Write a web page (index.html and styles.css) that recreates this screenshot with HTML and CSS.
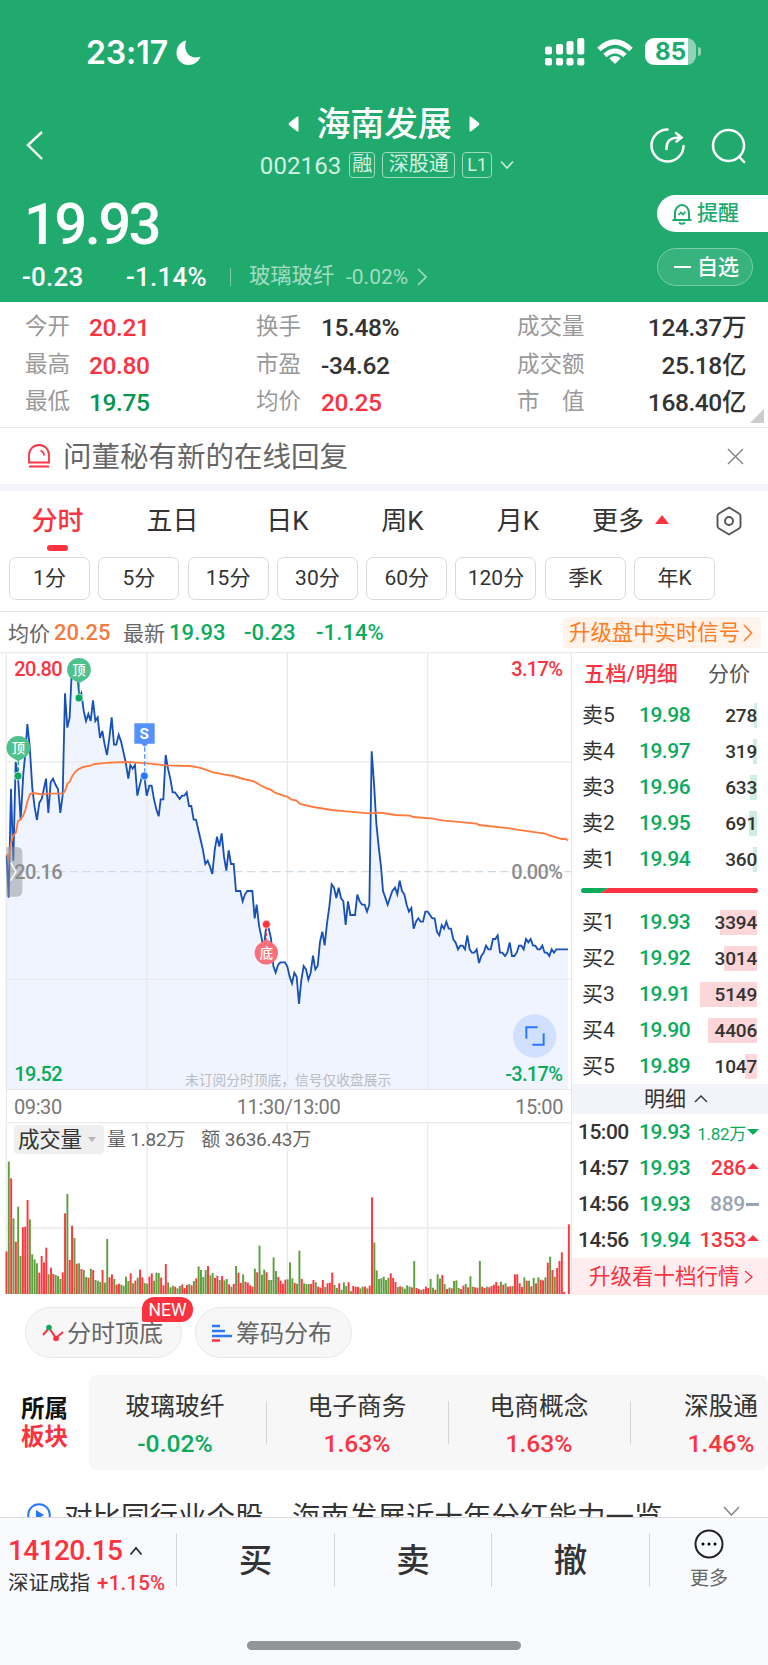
FILE: index.html
```html
<!DOCTYPE html>
<html lang="zh-CN">
<head>
    <meta charset="UTF-8">
    <meta name="viewport" content="width=device-width, initial-scale=1.0">
    <title>海南发展 002163</title>
    <link rel="stylesheet" href="styles.css">
</head>
<body>

<header class="header">
    <div class="status-bar">
        <div class="clock">23:17</div>
        <svg class="moon" width="26" height="26" viewBox="0 0 26 26"><path d="M9 1C5 3 1.500 7 1.500 13A12 12 0 0 0 13.500 25C19 25 23.500 22 25.500 16.500C17 20 7.500 14 11 .5Q10 .5 9 1Z" fill="#fff"/></svg>
        <div class="status-icons">
            <svg width="40" height="28" viewBox="0 0 40 28" fill="#fff">
                <rect x="0" y="8.500" width="7" height="8" rx="2"/><rect x="11" y="6" width="7" height="10.500" rx="2"/><rect x="21.500" y="3" width="7" height="13.500" rx="2"/><rect x="32.300" y="0" width="7" height="16.500" rx="2"/>
                <rect x="0" y="20" width="7" height="7.500" rx="2"/><rect x="11" y="20" width="7" height="7.500" rx="2"/><rect x="21.500" y="20" width="7" height="7.500" rx="2"/><rect x="32.300" y="20" width="7" height="7.500" rx="2"/>
            </svg>
            <svg class="wifi" width="36" height="26" viewBox="0 0 36 26" fill="none" stroke="#fff" stroke-width="5">
                <path d="M2 10.500Q18-4.500 34 10.500"/><path d="M8 16.500Q18 7.500 28 16.500"/><path d="M18 25L12.300 19.300Q18 14.700 23.700 19.300Z" fill="#fff" stroke="none"/>
            </svg>
            <div class="battery"><span>85</span></div>
            <div class="battery-tip"></div>
        </div>
    </div>

    <nav class="nav">
        <svg class="back" width="20" height="32" viewBox="0 0 20 32"><path d="M17 3L3 16L17 30" fill="none" stroke="#fff" stroke-width="2.400"/></svg>
        <div class="nav-center">
            <div class="title-row">
                <svg width="11" height="16" viewBox="0 0 11 16"><path d="M10.500 1V15Q10 16 8.500 15L1 9Q0 8 1 7L8.500 1Q10 0 10.500 1Z" fill="#fff"/></svg>
                <h1>海南发展</h1>
                <svg width="11" height="16" viewBox="0 0 11 16"><path d="M.5 1V15Q1 16 2.500 15L10 9Q11 8 10 7L2.500 1Q1 0 .5 1Z" fill="#fff"/></svg>
            </div>
            <div class="code-row">
                <span class="code">002163</span>
                <span class="tag">融</span>
                <span class="tag">深股通</span>
                <span class="tag tag-l1">L1</span>
                <svg width="14" height="10" viewBox="0 0 14 10"><path d="M1 1.500L7 8L13 1.500" fill="none" stroke="#c9ecdb" stroke-width="1.700"/></svg>
            </div>
        </div>
        <div class="nav-actions">
            <svg width="36" height="36" viewBox="0 0 36 36" fill="none" stroke="#fff" stroke-width="2.500" stroke-linecap="round">
                <path d="M17.500 1.500A16 16 0 1 0 33.500 18"/><path d="M16.500 21C16.500 13 20 9.500 30 9.500"/><path d="M26 5L31.500 9.500L26.500 13.500"/>
            </svg>
            <svg width="36" height="36" viewBox="0 0 36 36" fill="none" stroke="#fff" stroke-width="2.500" stroke-linecap="round">
                <circle cx="17.500" cy="17.500" r="15.500"/><path d="M28.500 29L33 34"/>
            </svg>
        </div>
    </nav>

    <div class="quote">
        <div class="quote-main">
            <div class="price">19.93</div>
            <div class="change-row">
                <span class="chg">-0.23</span>
                <span class="pct">-1.14%</span>
                <i class="sep"></i>
                <span class="industry">玻璃玻纤</span>
                <span class="industry-pct">-0.02%</span>
                <svg width="10" height="18" viewBox="0 0 10 18"><path d="M1 1L9 9L1 17" fill="none" stroke="#a3dcc3" stroke-width="1.600"/></svg>
            </div>
        </div>
        <div class="quote-actions">
            <button class="remind">
                <svg width="22" height="22" viewBox="0 0 22 22" fill="none" stroke="#20aa6d" stroke-width="2"><path d="M1.500 17H20.500M4 16.500V10A7 8 0 0 1 18 10V16.500M8 19.500Q11 22 14 19.500"/><path d="M7.500 12L10 9.500L12 11.500L14.500 8.500" stroke-width="1.700"/></svg>
                <span>提醒</span>
            </button>
            <button class="watch"><i></i><span>自选</span></button>
        </div>
    </div>
</header>

<section class="stats">
    <div class="stat-col col-1">
        <span>今开</span><b class="red">20.21</b>
        <span>最高</span><b class="red">20.80</b>
        <span>最低</span><b class="green-dark">19.75</b>
    </div>
    <div class="stat-col col-2">
        <span>换手</span><b>15.48%</b>
        <span>市盈</span><b>-34.62</b>
        <span>均价</span><b class="red">20.25</b>
    </div>
    <div class="stat-col col-3">
        <span>成交量</span><b>124.37万</b>
        <span>成交额</span><b>25.18亿</b>
        <span>市　值</span><b>168.40亿</b>
    </div>
    <i class="corner"></i>
</section>

<section class="notice">
    <svg width="22" height="24" viewBox="0 0 22 24" fill="none" stroke="#fb3340" stroke-width="1.800"><path d="M1 18.500V11A10 10 0 0 1 21 11V18.500ZM1 22.500H21M12.500 6.500Q16 8 16 11.500"/></svg>
    <span>问董秘有新的在线回复</span>
    <svg class="close" width="17" height="17" viewBox="0 0 17 17"><path d="M1 1L16 16M16 1L1 16" stroke="#888" stroke-width="1.500"/></svg>
</section>

<nav class="tabs">
    <a class="active">分时</a>
    <a>五日</a>
    <a>日K</a>
    <a>周K</a>
    <a>月K</a>
    <a class="more">更多<i></i></a>
    <svg width="26" height="30" viewBox="0 0 26 30" fill="none" stroke="#555" stroke-width="1.900"><path d="M13 1.500L23 7.500Q24.500 8.500 24.500 10V20Q24.500 21.500 23 22.500L13 28.500L3 22.500Q1.500 21.500 1.500 20V10Q1.500 8.500 3 7.500Z"/><circle cx="13" cy="15" r="4"/></svg>
</nav>

<div class="periods">
    <button>1分</button>
    <button>5分</button>
    <button>15分</button>
    <button>30分</button>
    <button>60分</button>
    <button>120分</button>
    <button>季K</button>
    <button>年K</button>
</div>

<div class="info-row">
    <span class="label">均价</span><b class="orange">20.25</b>
    <span class="label">最新</span><b class="green">19.93</b><b class="green c1">-0.23</b><b class="green c2">-1.14%</b>
    <a class="upgrade">升级盘中实时信号<svg width="10" height="18" viewBox="0 0 10 18"><path d="M1 1L8.500 9L1 17" fill="none" stroke="#ff7c21" stroke-width="1.600"/></svg></a>
</div>

<main class="board">
    <div class="charts">
        <!-- three svg units per css pixel -->
        <svg class="price-chart" width="572" height="437" viewBox="0 36 1716 1311">
            <polygon id="area" fill="#eff4ff"/>
            <g stroke="#ebebed" stroke-width="4" fill="none">
                <path d="M19 36V1347M441 36V1347M862 36V1347M1283 36V1347M0 38H1716M19 366H1714M19 1018H1714"/>
            </g>
            <path d="M19 695H1714" stroke="#cfdce5" stroke-width="4" stroke-dasharray="25 13"/>
            <polyline id="priceLine" fill="none" stroke="#1750b6" stroke-width="5.500"/>
            <polyline id="avgLine" fill="none" stroke="#ff7a3c" stroke-width="5.500"/>
            <path d="M19 621H50Q67 621 67 638V753Q67 770 50 770H19Z" fill="#8d8f94" fill-opacity=".5"/>
            <path d="M32 668L48 695L32 722" fill="none" stroke="#fff" stroke-width="4"/>

            <g fill="#4fc18d">
                <path d="M55 288A35 35 0 0 1 72 354L55 364L38 354A35 35 0 0 1 55 288Z"/>
                <path d="M237 54A35 35 0 0 1 254 120L237 130L220 120A35 35 0 0 1 237 54Z"/>
            </g>
            <g stroke="#12ad63" stroke-width="4" stroke-dasharray="12 6"><path d="M55 364V408M237 130V173"/></g>
            <g fill="#0bab5d" stroke="#fff" stroke-width="2"><circle cx="54" cy="408" r="12"/><circle cx="237" cy="174" r="12"/></g>
            <path d="M403 250H464V311H445L434 320L423 311H403Z" fill="#5591ff"/>
            <path d="M434 322V400" stroke="#5591ff" stroke-width="4" stroke-dasharray="13 8"/>
            <circle cx="433" cy="408" r="12" fill="#2878ff" stroke="#fff" stroke-width="2"/>
            <path d="M799 864V898" stroke="#fb3340" stroke-width="4" stroke-dasharray="10 5"/>
            <path d="M799 897L816 908A35 35 0 1 1 782 908Z" fill="#f9707b"/>
            <circle cx="799" cy="853" r="12" fill="#fb3340" stroke="#fff" stroke-width="2"/>
            <g class="marker">
                <text x="55" y="338">顶</text>
                <text x="237" y="104">顶</text>
                <text x="799" y="954">底</text>
                <text x="433" y="297" class="marker-s">S</text>
            </g>

            <g class="axis">
                <text x="43" y="107" fill="#fb3340">20.80</text>
                <text x="43" y="716" fill="#8c8c8c">20.16</text>
                <text x="43" y="1323" fill="#0bab5d">19.52</text>
                <g text-anchor="end">
                    <text x="1687" y="107" fill="#fb3340">3.17%</text>
                    <text x="1687" y="716" fill="#8c8c8c">0.00%</text>
                    <text x="1687" y="1323" fill="#0bab5d">-3.17%</text>
                </g>
            </g>
            <text x="555" y="1335" class="hint">未订阅分时顶底，信号仅收盘展示</text>
            <circle cx="1604" cy="1188" r="65" fill="#d2e0ff"/>
            <path d="M1579 1196V1162H1613M1631 1180V1214H1597" fill="none" stroke="#2878ff" stroke-width="6"/>
        </svg>
        <div class="time-axis"><span>09:30</span><span>11:30/13:00</span><span>15:00</span></div>
        <div class="volume">
            <div class="volume-head"><span class="volume-tag">成交量<i></i></span><span>量 1.82万</span><span>额 3636.43万</span></div>
            <svg class="volume-chart" width="572" height="172" viewBox="0 0 1716 516">
                <path d="M19 0V516M441 0V516M862 0V516M1283 0V516M19 2H1716M19 318H1714" fill="none" stroke="#ebebed" stroke-width="4"/>
                <g id="bars"></g>
            </svg>
        </div>
    </div>

    <aside class="orders">
        <div class="order-tabs"><b>五档/明细</b><span>分价</span></div>
        <div class="order-list" id="sells"></div>
        <div class="ratio"><svg width="177" height="5" viewBox="0 0 177 5"><path d="M2.500 0H27L20 5H2.500A2.500 2.500 0 0 1 2.500 0Z" fill="#0bab5d"/><path d="M27 0H174.500A2.500 2.500 0 0 1 174.500 5H20Z" fill="#fb3340"/></svg></div>
        <div class="order-list" id="buys"></div>
        <div class="detail-head"><span>明细</span><svg width="14" height="8" viewBox="0 0 14 8"><path d="M1 7L7 1L13 7" fill="none" stroke="#333" stroke-width="1.400"/></svg></div>
        <div class="ticks">
            <div class="tick"><b>15:00</b><b class="green">19.93</b><em class="green small">1.82万<i class="down"></i></em></div>
            <div class="tick"><b>14:57</b><b class="green">19.93</b><em class="red">286<i class="up"></i></em></div>
            <div class="tick"><b>14:56</b><b class="green">19.93</b><em class="flat">889<i class="dash"></i></em></div>
            <div class="tick"><b>14:56</b><b class="green">19.94</b><em class="red">1353<i class="up"></i></em></div>
        </div>
        <a class="upgrade-ten"><span>升级看十档行情</span><svg width="9" height="14" viewBox="0 0 9 14"><path d="M1 1L8 7L1 13" fill="none" stroke="#fb3340" stroke-width="1.300"/></svg></a>
    </aside>
</main>

<div class="tools">
    <button>
        <svg width="22" height="18" viewBox="0 0 22 18"><path d="M1 11L7 4L14 14L21 8" fill="none" stroke="#fb3340" stroke-width="2"/><circle cx="7" cy="3.500" r="2.800" fill="#0bab5d"/><circle cx="14" cy="14.500" r="2.800" fill="#fb3340"/></svg>
        <span>分时顶底</span>
        <span class="new">NEW</span>
    </button>
    <button>
        <svg width="21" height="18" viewBox="0 0 21 18" stroke-width="2.500"><path d="M0 2H8M0 7H13M0 12H20" stroke="#2878ff"/><path d="M0 16.500H8" stroke="#fb3340"/></svg>
        <span>筹码分布</span>
    </button>
</div>

<section class="sectors">
    <div class="sectors-title">所属<br><span>板块</span></div>
    <div class="sector-list">
        <div class="sector"><span>玻璃玻纤</span><b class="green">-0.02%</b></div>
        <div class="sector"><span>电子商务</span><b class="red">1.63%</b></div>
        <div class="sector"><span>电商概念</span><b class="red">1.63%</b></div>
        <div class="sector"><span>深股通</span><b class="red">1.46%</b></div>
    </div>
</section>

<div class="question">
    <svg width="24" height="24" viewBox="0 0 24 24"><circle cx="12" cy="12" r="10.800" fill="none" stroke="#2878ff" stroke-width="2"/><path d="M9 7V17L17 12Z" fill="#2878ff"/></svg>
    <span>对比同行业个股，海南发展近十年分红能力一览</span>
    <svg class="arrow" width="17" height="10" viewBox="0 0 17 10"><path d="M1 1L8.500 9L16 1" fill="none" stroke="#888" stroke-width="1.600"/></svg>
</div>

<footer class="trade-bar">
    <div class="trade-row">
        <div class="index">
            <div class="index-value">14120.15<svg width="14" height="10" viewBox="0 0 14 10"><path d="M1.500 8.500L7 2L12.500 8.500" fill="none" stroke="#333" stroke-width="1.900"/></svg></div>
            <div class="index-name">深证成指 <b>+1.15%</b></div>
        </div>
        <a>买</a>
        <a>卖</a>
        <a>撤</a>
        <div class="trade-more">
            <svg width="30" height="30" viewBox="0 0 30 30"><circle cx="15" cy="15" r="13.500" fill="none" stroke="#222" stroke-width="2"/><circle cx="9" cy="15" r="1.500"/><circle cx="15" cy="15" r="1.500"/><circle cx="21" cy="15" r="1.500"/></svg>
            <span>更多</span>
        </div>
    </div>
    <div class="home-indicator"></div>
</footer>

<script>
    const price = "20,648 26,773 33,446 40,662 47,366 54,408 62,540 70,400 76,340 82,252 89,318 97,445 104,502 111,540 118,488 125,477 132,445 138,416 145,519 152,427 159,416 167,435 174,447 181,519 188,465 195,160 202,263 209,232 216,78 224,100 231,90 238,173 244,160 251,212 258,243 265,222 272,243 279,181 286,243 293,232 300,294 307,273 314,314 321,345 328,294 335,232 342,314 349,314 356,284 363,304 370,335 377,366 385,416 391,375 398,386 405,375 412,467 419,437 426,408 433,408 440,467 448,437 455,437 462,478 469,508 476,529 482,478 490,478 497,345 504,386 511,416 518,457 525,457 532,467 539,477 546,467 553,467 560,457 567,498 574,498 581,539 588,539 595,570 602,600 609,631 616,672 623,662 630,680 637,702 644,631 651,590 658,620 665,580 672,650 679,692 686,631 693,672 701,672 708,753 721,753 728,784 735,763 742,753 757,753 764,835 770,794 777,856 784,890 791,930 799,853 806,865 813,895 820,978 827,998 834,975 841,967 855,967 862,980 869,1010 876,1030 883,998 890,1010 " +
        "897,1092 904,1020 911,978 918,988 925,1019 932,998 939,947 946,988 953,978 960,906 967,875 974,916 981,850 988,800 995,733 1002,743 1009,774 1016,743 1023,774 1030,784 1037,855 1044,784 1051,825 1065,825 1072,764 1079,784 1086,794 1094,794 1101,815 1108,794 1115,334 1122,430 1129,550 1136,620 1143,680 1149,753 1156,773 1163,794 1170,773 1177,753 1185,743 1192,763 1199,722 1206,753 1213,763 1220,794 1227,815 1234,804 1241,866 1248,845 1255,835 1262,845 1269,845 1276,815 1283,815 1290,825 1297,835 1304,835 1311,876 1318,886 1325,855 1332,866 1339,845 1346,866 1353,866 1360,898 1367,908 1374,928 1381,917 1388,917 1395,928 1402,886 1409,928 1416,938 1423,938 1430,928 1437,969 1444,948 1451,938 1458,917 1465,928 1472,928 1479,897 1486,897 1493,886 1500,938 1507,938 1515,948 1522,938 1529,907 1536,948 1543,948 1550,938 1557,917 1564,917 1571,928 1578,897 1585,907 1592,897 1599,917 1606,917 1613,928 1620,928 1627,917 1634,938 1641,938 1648,948 1655,928 1662,938 1669,928 1704,928";
    const avg = "20,642 26,662 33,610 40,585 47,580 54,543 62,538 69,528 76,510 82,485 90,462 100,459 118,462 130,464 140,461 190,460 196,450 203,430 209,426 216,410 225,396 235,388 250,381 270,377 285,372 305,370 330,368 380,366 410,368 450,371 500,376 570,378 595,382 615,388 640,397 670,403 700,408 730,417 760,423 780,435 800,445 812,449 825,458 850,467 862,470 875,479 890,482 900,492 940,501 995,510 1040,514 1108,520 1130,518 1150,519 1185,525 1230,527 1240,531 1300,536 1325,541 1430,551 1437,555 1530,565 1550,569 1635,581 1650,587 1685,597 1698,597 1704,602";

    document.getElementById("priceLine").setAttribute("points", price);
    document.getElementById("avgLine").setAttribute("points", avg);
    document.getElementById("area").setAttribute("points", "20,1347 " + price + " 1704,1347");

    // Volume per minute, negative = falling
    const volumes = [
        128, -397, 347, -227, 157, -262, -114, 200, 202, 282, -224, -119, -104, -92, 64, 114, 95, 139, -59, 79,
        60, -57, -54, -45, 65, 242, -300, 102, 205, -168, 91, -92, 75, -72, -51, 49, -76, 72, -42, -40,
        -36, 72, -34, -165, 50, 59, -45, 28, 31, -28, -25, -52, -39, 62, -32, 40, -49, 73, 50, -33,
        -31, 52, 62, -40, -64, -63, 49, 26, 90, -35, -20, -25, 22, -17, -24, 29, 18, 27, -30, 26,
        -39, 47, -83, -72, -51, -72, 84, -56, -63, 48, 55, -42, 54, -41, -45, 29, -22, 30, -84, 64,
        33, -59, 37, 34, 26, 22, -76, 65, -145, -58, -73, 65, -42, -42, -110, -69, 51, 40, 31, 43,
        -44, -95, -47, 33, -31, -130, 45, -32, -30, -30, 30, 42, -35, 22, 19, 42, -21, 32, 34, 64,
        -27, -18, 32, -13, -35, -24, 35, -9, 24, 22, 21, -17, -22, 22, -17, 25, 290, -154, -71, -45,
        -47, -52, -42, -49, 62, 48, 36, -21, 23, -21, -16, -26, -22, 20, -99, 18, 15, -12, 15, 22,
        18, -45, -19, 13, -59, -46, 57, -30, 15, -19, 17, -39, -41, -18, 15, 25, -30, 20, -53, -22,
        20, 19, -99, 22, 18, -22, 20, 24, 28, 36, 25, -37, 28, -32, 22, 23, -24, 59, 59, 32,
        21, -50, 40, -40, 23, -48, 32, -50, 43, 41, -50, 94, -112, 72, -52, 78, 99, 125, 6, 0, 209
    ];
    document.getElementById("bars").innerHTML = volumes.map((v, i) => {
        const h = Math.abs(v);
        const color = v < 0 ? "#5f9f3e" : "#ff363d";
        return `<rect x="${(16.5 + i * 7.03).toFixed(1)}" y="${516 - h}" width="5.8" height="${h}" fill="${color}"/>`;
    }).join("");

    // Order book: name, price, volume, depth bar width
    const sells = [["卖5", "19.98", 278, 3], ["卖4", "19.97", 319, 4], ["卖3", "19.96", 633, 7], ["卖2", "19.95", 691, 8], ["卖1", "19.94", 360, 4]];
    const buys = [["买1", "19.93", 3394, 37], ["买2", "19.92", 3014, 33], ["买3", "19.91", 5149, 57], ["买4", "19.90", 4406, 49], ["买5", "19.89", 1047, 12]];

    function renderOrders(id, rows) {
        document.getElementById(id).innerHTML = rows.map(([name, p, vol, w]) =>
            `<div class="order"><span>${name}</span><b class="green">${p}</b><em><i style="width: ${w}px"></i><span>${vol}</span></em></div>`
        ).join("");
    }

    renderOrders("sells", sells);
    renderOrders("buys", buys);
</script>

</body>
</html>
```
FILE: styles.css
```css
* {
    box-sizing: border-box;
}

body {
    margin: 0;
    width: 768px;
    height: 1665px;
    overflow: hidden;
    display: flex;
    flex-direction: column;
    background-color: #fff;
    color: #333;
    font-family: Roboto, "Noto Sans CJK SC", sans-serif;
    white-space: nowrap;
}

button {
    font-family: inherit;
    padding: 0;
    margin: 0;
    border: none;
}

svg {
    display: block;
    flex: none;
}

b {
    font-weight: 500;
}

em, i {
    font-style: normal;
}

.red { color: #fb3340; }
.green { color: #0bab5d; }
.green-dark { color: #079551; }
.orange { color: #f27b3d; }

/* Header */
.header {
    height: 302px;
    flex: none;
    background-color: #20aa6d;
    color: #fff;
}

.status-bar {
    display: flex;
    align-items: flex-start;
    height: 100px;
    padding: 38px 67px 0 86px;
}

.clock {
    width: 89px;
    font: 600 32px/30px Inter, sans-serif;
    letter-spacing: -0.1px;
}

.moon {
    margin-top: 2px;
}

.status-icons {
    display: flex;
    margin-left: auto;
}

.wifi {
    margin: 1px 12px 0 12px;
}

.battery {
    width: 51px;
    height: 27px;
    border-radius: 9px;
    background: linear-gradient(90deg, #fff 43px, #8fd4b6 43px);
    color: #20aa6d;
    font: 700 24px/28px Inter, sans-serif;
    text-align: center;
}

.battery-tip {
    width: 3px;
    height: 9px;
    margin: 9px 0 0 2px;
    border-radius: 0 3px 3px 0;
    background-color: #8fd4b6;
}

.nav {
    display: grid;
    grid-template-columns: 150px 1fr 150px;
    height: 90px;
}

.back {
    margin: 29px 0 0 25px;
}

.title-row {
    display: flex;
    align-items: center;
    justify-content: center;
    gap: 18px;
    height: 48px;
}

h1 {
    margin: 0;
    font-size: 34px;
    font-weight: 500;
    line-height: 48px;
    letter-spacing: -0.3px;
}

.code-row {
    display: flex;
    align-items: center;
    justify-content: center;
    gap: 7px;
    height: 34px;
    padding-left: 6px;
    color: #d3f0e2;
}

.code {
    font-size: 24px;
    letter-spacing: 0.1px;
    line-height: 30px;
    padding-top: 2px;
    margin-right: 1px;
}

.tag {
    height: 26px;
    padding: 0 2px;
    border: 1px solid #a0dac1;
    border-radius: 4px;
    font-size: 20px;
    line-height: 23px;
}

.tag:nth-of-type(3) {
    padding: 0 5.5px;
}

.tag-l1 {
    padding: 0 4px;
    margin-right: 1px;
    font-size: 18px;
}

.nav-actions {
    display: flex;
    justify-content: flex-end;
    gap: 25px;
    padding: 28px 21px 0 0;
}

.quote {
    display: flex;
    justify-content: space-between;
    height: 112px;
}

.price {
    height: 66px;
    padding-left: 24px;
    font-size: 58px;
    font-weight: 500;
    line-height: 69px;
    letter-spacing: -2.6px;
}

.change-row {
    display: flex;
    align-items: center;
    height: 42px;
    padding-left: 22px;
    font-size: 26px;
    font-weight: 500;
    letter-spacing: 0.2px;
}

.chg { width: 104px; }
.pct { width: 104px; }

.sep {
    width: 1px;
    height: 18px;
    margin-right: 18px;
    background-color: #7accaa;
}

.industry, .industry-pct {
    width: 97px;
    font-size: 21.3px;
    font-weight: 400;
    line-height: 30px;
    padding-bottom: 2px;
    color: #a3dcc3;
    letter-spacing: 0;
}

.industry-pct {
    width: 71px;
    font-size: 21px;
    padding: 0;
}

.quote-actions {
    display: flex;
    flex-direction: column;
    gap: 16px;
    width: 111px;
    padding-top: 5px;
}

.quote-actions span {
    line-height: 32px;
    padding-bottom: 1px;
}

.remind, .watch {
    display: flex;
    align-items: center;
    gap: 4px;
    height: 37px;
    padding-left: 14px;
    border-radius: 19px 0 0 19px;
    background-color: #fff;
    color: #20aa6d;
    font-size: 21px;
    font-weight: 500;
}

.watch {
    width: 96px;
    height: 38px;
    gap: 6px;
    padding-left: 16px;
    border: 1px solid #7accaa;
    border-radius: 19px;
    background-color: #38b37d;
    color: #fff;
}

.watch i {
    width: 17px;
    height: 2px;
    background-color: #fff;
}

/* Stats */
.stats {
    position: relative;
    display: flex;
    height: 126px;
    flex: none;
    padding-top: 7px;
    border-bottom: 1px solid #e9e9ee;
}

.stat-col {
    display: grid;
    grid-template-rows: repeat(3, 37.5px);
    align-items: start;
    font-size: 24.5px;
    line-height: 38px;
}

.stat-col span {
    color: #999;
    font-size: 22.5px;
    line-height: 34px;
    text-align: left;
}

.col-1 {
    width: 231px;
    padding-left: 25px;
    grid-template-columns: 64px 1fr;
}

.col-2 {
    width: 261px;
    padding-left: 25px;
    grid-template-columns: 65px 1fr;
}

.col-3 {
    width: 254px;
    padding-left: 25px;
    grid-template-columns: 80px 1fr;
    text-align: right;
}

.stat-col b {
    letter-spacing: -0.4px;
}

.corner {
    position: absolute;
    right: 4px;
    bottom: 4px;
    border-left: 14px solid transparent;
    border-bottom: 14px solid #ccc;
}

/* Notice */
.notice {
    display: flex;
    align-items: center;
    height: 63px;
    flex: none;
    padding: 0 24px 0 28px;
    border-bottom: 7px solid #f3f4f9;
    color: #666;
    font-size: 28.5px;
}

.notice span {
    margin-left: 13px;
    line-height: 36px;
    padding-top: 4px;
}

.close {
    margin-left: auto;
}

/* Tabs */
.tabs {
    display: grid;
    grid-template-columns: 115px 115px 115px 115px 116px 109px 1fr;
    height: 66px;
    flex: none;
    text-align: center;
    font-size: 26px;
}

.tabs a {
    line-height: 61px;
}

.tabs .active {
    color: #fb3340;
    font-weight: 500;
}

.active::after {
    content: "";
    display: block;
    width: 21px;
    height: 6px;
    margin: -7px auto 0;
    border-radius: 3px;
    background-color: #fb3340;
}

.more i {
    display: inline-block;
    margin: 0 0 6px 11px;
    border: 7px solid transparent;
    border-top: none;
    border-bottom: 9px solid #fb3340;
}

.tabs svg {
    margin: 15px 0 0 31px;
}

.periods {
    display: flex;
    gap: 8.3px;
    height: 55px;
    flex: none;
    padding-left: 9px;
    border-bottom: 1px solid #e3e3e6;
}

.periods button {
    width: 81px;
    height: 43px;
    border: 1px solid #dadada;
    border-radius: 7px;
    background-color: #fff;
    color: #333;
    font-size: 21px;
    line-height: 39px;
}

.info-row {
    display: flex;
    align-items: center;
    height: 40px;
    flex: none;
    padding: 0 7px 0 8px;
    font-size: 22px;
}

.info-row .label {
    width: 46px;
    padding-bottom: 1px;
    color: #666;
    font-size: 21px;
}

.info-row b {
    width: 69px;
    padding-top: 1px;
    letter-spacing: 0.1px;
}

.info-row .c1 {
    margin-left: 6px;
}

.info-row .c2 {
    margin-left: 3px;
}

.upgrade {
    display: flex;
    align-items: center;
    gap: 3px;
    width: 198px;
    height: 31px;
    margin-left: auto;
    padding: 1px 0 0 6px;
    border-radius: 4px;
    background-color: #fff4eb;
    color: #ff7c21;
    font-size: 21.4px;
    line-height: 28px;
}

/* Charts and order book */
.board {
    display: flex;
    height: 642px;
    flex: none;
}

.charts {
    width: 572px;
    border-right: 1px solid #e6e6ea;
}

.price-chart .axis {
    letter-spacing: -2px;
    font-weight: 500;
}

.price-chart .axis text {
    font-size: 60px;
}

.price-chart .marker text {
    font-size: 40px;
    font-weight: 500;
    fill: #fff;
    text-anchor: middle;
}

.price-chart .marker .marker-s {
    font-size: 46px;
    font-weight: 700;
}

.price-chart .hint {
    font-size: 41.3px;
    fill: #b9bcc2;
}

.time-axis {
    display: flex;
    justify-content: space-between;
    height: 33px;
    margin-left: 6px;
    padding: 0 8px 0 7px;
    border-top: 1px solid #e6e6ea;
    border-left: 1px solid #e6e6ea;
    color: #777;
    font-size: 20px;
    line-height: 34px;
    letter-spacing: -0.4px;
}

.volume {
    display: grid;
    height: 172px;
}

.volume-head, .volume-chart {
    grid-area: 1 / 1;
}

.volume-head {
    z-index: 1;
    display: flex;
    gap: 16px;
    height: 29px;
    margin: 3px 0 0 14px;
    color: #666;
    font-size: 19px;
    line-height: 29px;
    letter-spacing: -0.2px;
}

.volume-tag {
    display: flex;
    align-items: center;
    gap: 6px;
    width: 90px;
    margin-right: -13px;
    padding-left: 4px;
    border-radius: 4px;
    background-color: #efefef;
    color: #333;
    font-size: 21.5px;
}

.volume-tag i {
    border: 4px solid transparent;
    border-bottom: none;
    border-top: 5px solid #b5b5b5;
}

.orders {
    width: 196px;
    border-top: 1px solid #e6e6ea;
    font-size: 21px;
}

.order-tabs {
    display: flex;
    justify-content: space-between;
    height: 44px;
    padding: 0 18px 0 12px;
    line-height: 43px;
    color: #555;
}

.order-tabs b {
    color: #fb3340;
    letter-spacing: 0.4px;
}

.order {
    display: grid;
    grid-template-columns: 57px 61px 1fr;
    align-items: center;
    height: 36px;
    padding: 0 11px 0 10px;
}

.order > span {
    line-height: 30px;
}

.order b, .tick b {
    letter-spacing: -0.5px;
}

.order em {
    display: grid;
    justify-items: end;
    align-items: center;
    font-size: 19px;
    font-weight: 500;
    letter-spacing: -0.2px;
}

.order em i, .order em span {
    grid-area: 1 / 1;
}

.order i {
    height: 25px;
    background-color: #fcd6d9;
}

#sells .order i {
    background-color: #ceeedf;
}

.ratio {
    height: 27px;
    padding: 11px 0 0 9px;
}

.detail-head {
    display: flex;
    align-items: center;
    justify-content: center;
    gap: 8px;
    height: 30px;
    padding-left: 12px;
    background-color: #f3f4f9;
}

.detail-head span {
    line-height: 28px;
    padding-bottom: 1px;
}

.tick {
    display: grid;
    grid-template-columns: 61px 50px 1fr;
    align-items: center;
    height: 36px;
    padding: 0 9px 0 6px;
}

.ticks {
    height: 144px;
}

.tick em {
    display: flex;
    align-items: center;
    justify-content: flex-end;
    gap: 1px;
    letter-spacing: -0.3px;
    font-weight: 500;
}

.tick .small {
    font-size: 17px;
    font-weight: 400;
}

.tick .flat {
    color: #9aa3b0;
}

.up, .down {
    border: 6.5px solid transparent;
    border-top: none;
    border-bottom: 6px solid #fb3340;
    margin-bottom: 5px;
}

.down {
    border-bottom: none;
    border-top: 6px solid #0bab5d;
    margin-bottom: 0;
}

.dash {
    width: 13px;
    height: 3px;
    background-color: #9aa3b0;
}

.upgrade-ten {
    display: flex;
    align-items: center;
    gap: 4px;
    height: 37px;
    padding-left: 17px;
    background-color: #ffecee;
    color: #fb3340;
    font-size: 21.5px;
}

.upgrade-ten span {
    line-height: 30px;
}

/* Tools */
.tools {
    display: flex;
    gap: 13px;
    height: 82px;
    flex: none;
    padding: 13px 0 0 25px;
}

.tools button {
    position: relative;
    display: flex;
    align-items: center;
    gap: 3px;
    width: 157px;
    height: 51px;
    padding-left: 16px;
    border: 1px solid #e8e8e8;
    border-radius: 26px;
    background-color: #f7f7f7;
    color: #666;
    font-size: 24px;
}

.tools button span {
    padding-bottom: 2px;
}

.tools .new {
    position: absolute;
    top: -11px;
    right: -12px;
    width: 51px;
    height: 25px;
    padding: 0;
    border-radius: 12px 12px 12px 2px;
    background-color: #fb3340;
    color: #fff;
    font-size: 17.5px;
    line-height: 26px;
    text-align: center;
}

.sectors {
    display: flex;
    height: 95px;
    flex: none;
    margin-top: -1px;
}

.sectors-title {
    width: 89px;
    padding: 20px 0 0 21px;
    font-size: 23.5px;
    font-weight: 700;
    line-height: 28px;
    color: #111;
}

.sectors-title span {
    color: #fb3340;
}

.sector-list {
    display: flex;
    width: 679px;
    overflow: hidden;
    border-radius: 8px;
    background-color: #f7f7f7;
}

.sector {
    position: relative;
    flex: 0 0 182px;
    display: flex;
    flex-direction: column;
    align-items: center;
    padding: 13px 10px 0 0;
    font-size: 24.7px;
    line-height: 37px;
}

.sector::after {
    content: "";
    position: absolute;
    top: 26px;
    right: 4px;
    width: 1px;
    height: 43px;
    background-color: #d5d5d5;
}

.question {
    display: flex;
    height: 47px;
    flex: none;
    overflow: hidden;
    padding: 33px 28px 0 27px;
    font-size: 28.5px;
    line-height: 29px;
    color: #333;
}

.question span {
    margin-left: 13px;
}

.arrow {
    margin: 3px 0 0 auto;
}

/* Bottom bar */
.trade-bar {
    position: relative;
    flex: 1;
    border-top: 1px solid #dcdce0;
    background-color: #f9fafd;
}

.trade-row {
    display: grid;
    grid-template-columns: 177px 158px 157px 158px 1fr;
    grid-template-rows: 54px;
    height: 54px;
    margin-top: 15px;
}

.trade-row a {
    border-right: 1px solid #d5d5d8;
    text-align: center;
    font-size: 33.5px;
    font-weight: 500;
    line-height: 56px;
}

.index {
    border-right: 1px solid #d5d5d8;
    padding-left: 8px;
}

.index-value {
    display: flex;
    align-items: center;
    gap: 7px;
    color: #fb3340;
    font-size: 28px;
    line-height: 36px;
    letter-spacing: -0.6px;
    font-weight: 500;
}

.index-name {
    font-size: 20.5px;
    line-height: 28px;
}

.index-name b {
    color: #fb3340;
    margin-left: 2px;
    letter-spacing: 0.2px;
}

.trade-more {
    display: flex;
    flex-direction: column;
    align-items: center;
    margin-top: -4px;
    font-size: 19px;
    line-height: 39px;
    color: #666;
}

.home-indicator {
    width: 274px;
    height: 9px;
    margin: 54px auto 0;
    border-radius: 5px;
    background-color: #939496;
}
```
